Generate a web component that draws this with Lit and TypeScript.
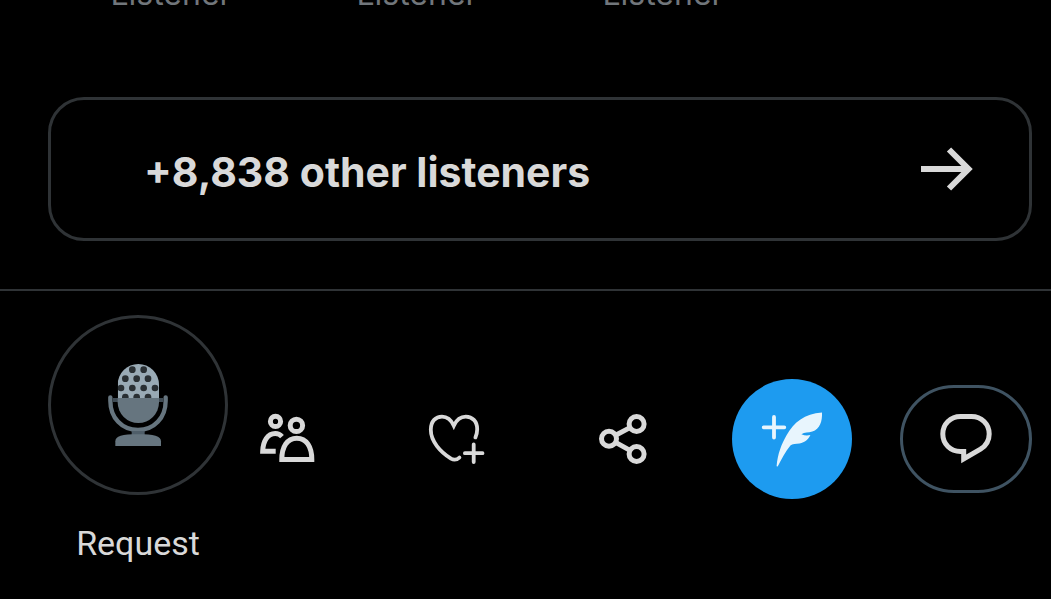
import { LitElement, html, svg, css } from "lit";
import { customElement, property } from "lit/decorators.js";

const heart = svg`<g stroke-width="3.8" stroke-linecap="round" stroke-linejoin="miter">
  <path d="M33.4 48.6C30.6 51 28.6 51.6 25 49.6C14.4 43 4.8 32.4 4.8 20.8C4.8 12 9.8 7.6 16 7.6C21.8 7.6 25.4 11.4 27.8 16.6C30.2 11.4 34 7.6 39.8 7.6C46.2 7.6 51.2 12.2 51.2 20.2C51.2 23.2 50.6 25.6 49.4 28.4"/>
  <path d="M47.7 35.4V53M38.9 44.2H56.5"/></g>`;

const people = svg`<g stroke-width="5">
  <circle cx="17.5" cy="12.4" r="5.1"/>
  <circle cx="38.4" cy="16.4" r="6.2"/>
  <path d="M17.7 42.2H4.7C5 32 9.5 24.6 17.3 24.6C20 24.6 22.2 25.6 24 27.6"/>
  <path d="M23.8 50.5C23.8 38 29 29.2 38.8 29.2S53.8 38 53.8 50.5Z"/></g>`;

const share = svg`<g stroke-width="5">
  <circle cx="15" cy="29.8" r="7.5"/><circle cx="42.6" cy="15" r="7.5"/><circle cx="42.6" cy="45" r="7.5"/>
  <path d="M21.6 26.2L36 18.6M21.6 33.4L36 41.4"/></g>`;

const chat = svg`<path stroke-width="5" d="M27.7 42.5H24.5C14.5 42.5 6.8 35 6.8 25S14.5 7.5 24.5 7.5H35.5C45.5 7.5 53.2 15 53.2 25C53.2 31.5 50 36.8 44.5 40.2L27.7 50Z"/>`;

const arrow = svg`<path stroke-width="6" d="M4 30H51M32 10.5L51.5 30L32 49.5"/>`;

const DOTS = [[127, 59], [161, 59], [106, 86], [140, 86], [174, 86], [93, 114], [127, 114], [161, 114], [195, 114], [106, 141], [140, 141], [174, 141]];

@customElement("line-icon")
class LineIcon extends LitElement {
  @property({ attribute: false }) shape: unknown;
  static styles = css`
    :host { display: block; flex: none; width: 60px; height: 60px; }
    .icon { display: block; width: 100%; height: 100%; fill: none; stroke: currentColor; }
  `;
  render() {
    return html`<svg class="icon" viewBox="0 0 60 60" aria-hidden="true">${this.shape}</svg>`;
  }
}

@customElement("app-root")
class AppRoot extends LitElement {
  static styles = css`
    :host {
      display: block;
      min-height: 100vh;
      overflow: hidden;
      background: #000;
      color: #d9d9d9;
      font-family: Inter, "Liberation Sans", sans-serif;
    }
    * { box-sizing: border-box; }
    button { padding: 0; border: 0; background: none; color: inherit; font: inherit; cursor: pointer; }
    .roles {
      display: grid;
      grid-template-columns: repeat(4, 1fr);
      align-content: end;
      overflow: hidden;
      height: 16px;
      padding: 0 19px 0 48px;
      color: #71767b;
      font-size: 32px;
      line-height: 44px;
      text-align: center;
    }
    .others { padding: 81px 19px 48px 48px; }
    .card {
      display: flex;
      align-items: center;
      justify-content: space-between;
      width: 100%;
      height: 144px;
      padding: 6px 52px 0 93px;
      border: 3px solid #2f3336;
      border-radius: 36px;
      font-size: 41px;
      font-weight: 700;
      line-height: 60px;
    }
    .card line-icon { margin-bottom: 6px; }
    .bar {
      display: flex;
      align-items: flex-start;
      border-top: 2px solid #2f3336;
      padding: 24px 19px 0 48px;
    }
    .request { width: 180px; flex: none; font-family: Roboto, sans-serif; font-size: 34px; line-height: 44px; text-align: center; }
    .ring {
      display: grid;
      place-items: center;
      width: 180px;
      height: 180px;
      margin-bottom: 26px;
      border: 3px solid #2f3336;
      border-radius: 50%;
    }
    .mic { width: 100px; height: 110px; }
    .actions { display: flex; flex: 1; align-items: center; justify-content: space-between; margin-top: 64px; }
    .action { display: grid; place-items: center; width: 120px; height: 120px; border-radius: 60px; }
    .compose { background: #1d9bf0; color: #e8f5fd; }
    .feather { width: 120px; height: 120px; }
    .chat { width: 132px; height: 108px; border: 3px solid #3f5362; border-radius: 54px; }
  `;

  render() {
    return html`
      <div class="roles"><span>Listener</span><span>Listener</span><span>Listener</span></div>
      <div class="others">
        <button class="card"><span>+8,838 other listeners</span><line-icon .shape=${arrow}></line-icon></button>
      </div>
      <footer class="bar">
        <button class="request">
          <span class="ring">
            <svg class="mic" viewBox="-6 0 300 330" aria-hidden="true">
              <clipPath id="head"><path d="M83 144V104a62 62 0 0 1 124 0V144Z"/></clipPath>
              <path d="M61 142V152C61 204 96 240 144 240S227 204 227 152V142" fill="none" stroke="#66757f" stroke-width="13" stroke-linecap="round"/>
              <path d="M125 243h39v12h-39z" fill="#4f5e69"/>
              <path d="M76 288V274C76 258 96 253 144 253S213 258 213 274V288Z" fill="#66757f"/>
              <g clip-path="url(#head)">
                <path d="M83 40H207V146H83Z" fill="#99aab5"/>
                ${DOTS.map(([x, y]) => svg`<circle cx=${x} cy=${y} r="10" fill="#292f33"/>`)}
              </g>
              <path d="M68 144H220V156H68Z" fill="#3f4b54"/>
              <path d="M83 144H207V157a62 62 0 0 1-124 0Z" fill="#66757f"/>
            </svg>
          </span>
          <span>Request</span>
        </button>
        <nav class="actions" aria-label="Space actions">
          <button class="action" aria-label="People"><line-icon .shape=${people}></line-icon></button>
          <button class="action" aria-label="React"><line-icon .shape=${heart}></line-icon></button>
          <button class="action" aria-label="Share"><line-icon .shape=${share}></line-icon></button>
          <button class="action compose" aria-label="Compose">
            <svg class="feather" viewBox="0 0 120 120" fill="currentColor" aria-hidden="true">
              <path d="M42 38V58.6M31.7 48.3H52.3" stroke="currentColor" stroke-width="3.8" stroke-linecap="round"/>
              <path d="M90 33.6C90.4 42 88 50.5 80.3 52.6C76.5 53.8 72.5 53.2 69.4 55.2C72.6 56.6 75.6 56.6 78.4 56C76.5 60.5 73 63.4 67.5 64.4C63.8 65 60.4 64.6 58.4 66.4C53.5 72.5 49.5 80 45.7 87.6L44.6 87.2C45.6 75 49.5 65 54.7 56C62 43.5 72.5 34.6 90 33.6Z"/>
            </svg>
          </button>
          <button class="action chat" aria-label="Chat"><line-icon .shape=${chat}></line-icon></button>
        </nav>
      </footer>`;
  }
}
